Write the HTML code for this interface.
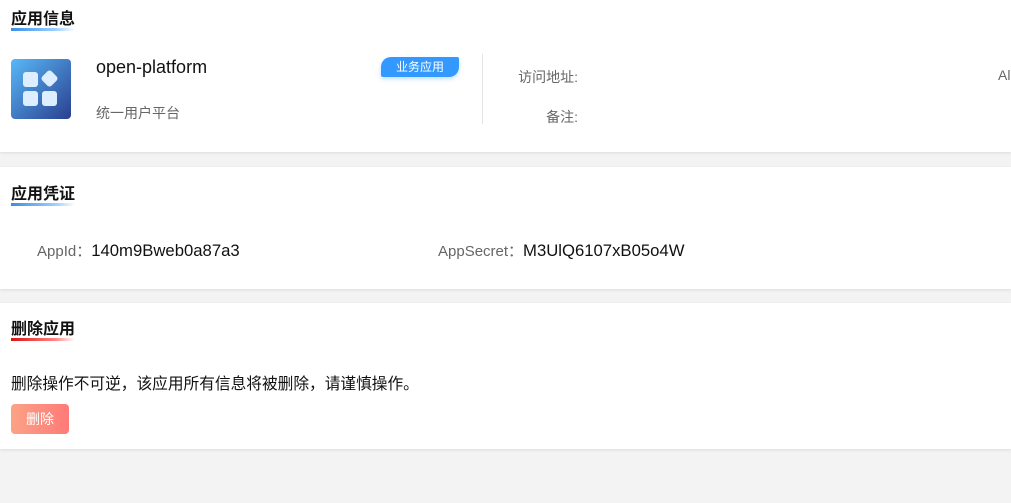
<!DOCTYPE html>
<html><head><meta charset="utf-8"><style>
body{margin:0;width:1011px;height:503px;background:#f3f3f3;font-family:"Liberation Sans","Noto Sans CJK SC",sans-serif;position:relative;overflow:hidden}
.card{position:absolute;left:0;width:1011px;background:#fff;box-shadow:0 1px 3px rgba(0,0,0,.1)}
.t{position:absolute;left:11px;font-size:16px;font-weight:bold;color:#111;line-height:20px}
.t i{position:absolute;left:0;bottom:-1px;height:3px;width:64px}
.a{position:absolute;white-space:nowrap}
</style></head><body>
<div class="card" style="top:0;height:152px">
 <div class="t" style="top:10px">应用信息<i style="background:linear-gradient(90deg,#3a8ee6,#9cd0ff 70%,#fff)"></i></div>
 <div class="a" style="left:11px;top:59px;width:60px;height:60px;border-radius:4px;background:linear-gradient(135deg,#59b8f8,#2a3f8f)">
  <svg width="60" height="60" viewBox="0 0 60 60"><g fill="#dceeff"><rect x="12" y="13" width="15" height="15" rx="3"/><rect x="12" y="32" width="15" height="15" rx="3"/><rect x="31" y="32" width="15" height="15" rx="3"/><rect x="32" y="13" width="13" height="13" rx="3" transform="rotate(45 38.5 19.5)"/></g></svg>
 </div>
 <div class="a" style="left:96px;top:57px;font-size:18px;color:#111">open-platform</div>
 <div class="a" style="left:96px;top:103px;font-size:14px;color:#666">统一用户平台</div>
 <div class="a" style="left:381px;top:57px;width:78px;height:20px;background:#3399ff;color:#fff;font-size:12px;line-height:20px;text-align:center;border-radius:10px 2px 10px 2px;box-shadow:0 2px 4px rgba(51,153,255,.3)">业务应用</div>
 <div class="a" style="left:482px;top:54px;width:1px;height:70px;background:#e4e4e4"></div>
 <div class="a" style="left:480px;width:98px;text-align:right;top:67px;font-size:14px;color:#666">访问地址:</div>
 <div class="a" style="left:480px;width:98px;text-align:right;top:107px;font-size:14px;color:#666">备注:</div>
 <div class="a" style="left:998px;top:67px;font-size:14px;color:#666">Al</div>
</div>
<div class="card" style="top:167px;height:122px">
 <div class="t" style="top:18px">应用凭证<i style="background:linear-gradient(90deg,#3a8ee6,#9cd0ff 70%,#fff)"></i></div>
 <div class="a" style="left:37px;top:73px;font-size:15px;color:#666">AppId：<span style="color:#111;font-size:16.7px">140m9Bweb0a87a3</span></div>
 <div class="a" style="left:438px;top:73px;font-size:15px;color:#666">AppSecret：<span style="color:#111;font-size:16.7px">M3UlQ6107xB05o4W</span></div>
</div>
<div class="card" style="top:303px;height:146px">
 <div class="t" style="top:17px">删除应用<i style="background:linear-gradient(90deg,#e01010,#f88 70%,#fff)"></i></div>
 <div class="a" style="left:11px;top:68px;font-size:15.7px;color:#111">删除操作不可逆，该应用所有信息将被删除，请谨慎操作。</div>
 <div class="a" style="left:11px;top:101px;width:58px;height:30px;border-radius:4px;background:linear-gradient(90deg,#fba286,#ff7a78);color:#fff;font-size:14px;line-height:30px;text-align:center">删除</div>
</div>
</body></html>
